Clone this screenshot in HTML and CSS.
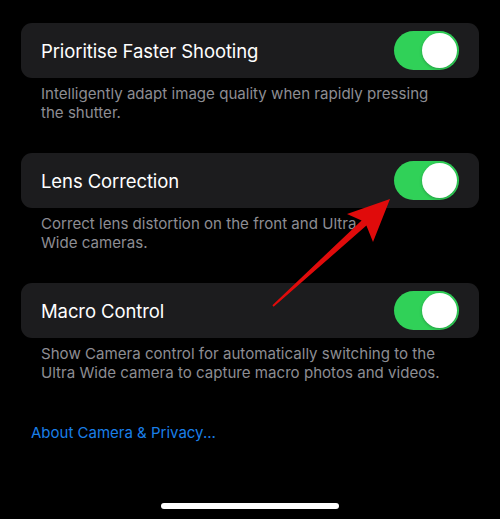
FILE: index.html
```html
<!DOCTYPE html>
<html>
<head>
 <meta charset="utf-8">
 <meta name="viewport" content="width=device-width, initial-scale=1.0">
 <title>Camera Settings</title>
 <link rel="stylesheet" href="styles.css">
</head>
<body>
<div class="Screen">

 <div class="Group">
  <div class="Cell">
   <span class="CellLabel">Prioritise Faster Shooting</span>
   <span class="Switch"><span class="Knob"></span></span>
  </div>
  <p class="Footer">Intelligently adapt image quality when rapidly pressing the shutter.</p>
 </div>

 <div class="Group">
  <div class="Cell">
   <span class="CellLabel">Lens Correction</span>
   <span class="Switch"><span class="Knob"></span></span>
  </div>
  <p class="Footer">Correct lens distortion on the front and Ultra<br>Wide cameras.</p>
 </div>

 <div class="Group">
  <div class="Cell">
   <span class="CellLabel">Macro Control</span>
   <span class="Switch"><span class="Knob"></span></span>
  </div>
  <p class="Footer">Show Camera control for automatically switching to the Ultra Wide camera to capture macro photos and videos.</p>
 </div>

 <a class="AboutLink" href="#">About Camera &amp; Privacy...</a>

 <div class="HomeBar"></div>

 <!-- Annotation arrow -->
 <svg class="Arrow" width="500" height="519" viewBox="0 0 500 519">
  <polygon fill="#e00b0b" points="390,199 373,242 366.4,225.6 273.6,306.8 272.4,305.2 361.6,220.4 347,214"/>
 </svg>

</div>
</body>
</html>
```

FILE: styles.css
```css
body {
 margin:0;
 background-color:#000000;
 font-family:Inter, "Noto Sans", sans-serif;
}

.Screen {
 position:relative;
 box-sizing:border-box;
 width:500px;
 height:519px;
 padding:23px 21px 10px 21px;
 display:flex;
 flex-direction:column;
}

.Group {
 margin-bottom:31px;
}
.Cell {
 height:55px;
 box-sizing:border-box;
 padding:0 20px 0 20px;
 display:flex;
 align-items:center;
 justify-content:space-between;
 border-radius:11px;
 background:#1c1c1e;
}
.CellLabel {
 color:#ffffff;
 font-size:18.5px;
 letter-spacing:-0.1px;
}
.Footer {
 margin:0;
 padding:6px 34px 0 20px;
 color:#8d8d93;
 font-size:15.1px;
 line-height:19px;
}

/* Switch */
.Switch {
 width:65px;
 height:39px;
 box-sizing:border-box;
 padding:2px;
 border-radius:20px;
 background:#30d158;
 display:flex;
 justify-content:flex-end;
}
.Knob {
 width:35px;
 height:35px;
 border-radius:50%;
 background:#ffffff;
 box-shadow:0 1px 3px rgba(0,0,0,0.25);
}

.AboutLink {
 margin:10px 0 0 10px;
 color:#1a7fe8;
 font-size:15px;
 line-height:20px;
 text-decoration:none;
 align-self:flex-start;
}

.HomeBar {
 margin-top:auto;
 align-self:center;
 width:178px;
 height:6px;
 border-radius:3px;
 background:#ffffff;
}

.Arrow {
 position:absolute;
 top:0;
 left:0;
 pointer-events:none;
}
```
